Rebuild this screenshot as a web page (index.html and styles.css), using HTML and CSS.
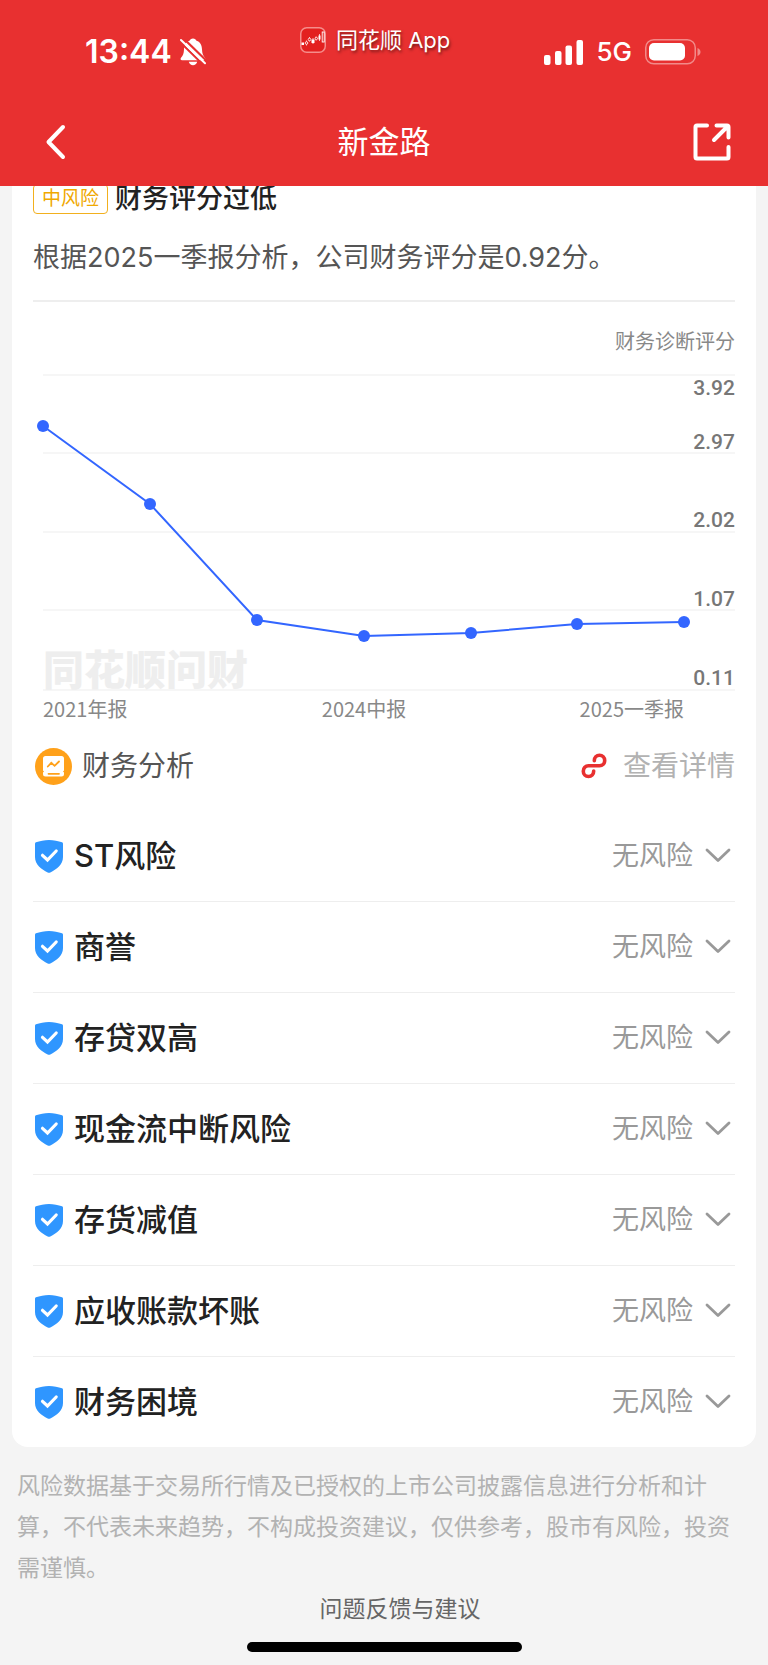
FILE: index.html
```html
<!DOCTYPE html>
<html lang="zh-CN">
<head>
<meta charset="UTF-8">
<meta name="viewport" content="width=device-width, initial-scale=1.0">
<title>新金路</title>
<link rel="stylesheet" href="styles.css">
</head>
<body>
    <!-- shared icons -->
    <svg class="sprite" aria-hidden="true">
        <symbol id="shield" viewBox="0 0 28 33">
            <path d="M14 0C18.500 0 23.500 1 27 2.300Q28 2.700 28 3.800V17C28 24.500 21.500 29.500 15.300 32.500Q14 33.200 12.700 32.500C6.500 29.500 0 24.500 0 17V3.800Q0 2.700 1 2.300C4.500 1 9.500 0 14 0Z" fill="#2f96ff"/>
            <path d="M7.500 15.300L12.500 20L21.200 11" fill="none" stroke="#fff" stroke-width="3.200" stroke-linecap="round" stroke-linejoin="miter"/>
        </symbol>
        <symbol id="arrow-down" viewBox="0 0 26 16">
            <path d="M2 2L13 12.500L24 2" fill="none" stroke="#999" stroke-width="2.800" stroke-linecap="round" stroke-linejoin="round"/>
        </symbol>
    </svg>

    <header class="header">
        <div class="status-bar">
            <div class="status-time">
                <span>13:44</span>
                <svg width="26" height="28" viewBox="0 0 26 28" aria-hidden="true">
                    <path d="M13 0.500C14.800 0.500 16 1.500 16.500 2.800C20.500 4 21.800 7.500 22 11.500C22.200 15.500 23 17.500 24.800 19.500C26 21 25.400 22.300 24 22.300H2C0.600 22.300 0 21 1.200 19.500C3 17.500 3.800 15.500 4 11.500C4.200 7.500 5.500 4 9.500 2.800C10 1.500 11.200 0.500 13 0.500Z" fill="#fff"/>
                    <path d="M8.800 23.800H17.200C16.600 26 15 27.200 13 27.200S9.400 26 8.800 23.800Z" fill="#fff"/>
                    <path d="M2.500 -0.500L27.500 23.700" stroke="#e83030" stroke-width="2.200"/>
                    <path d="M-0.500 3.500L24.500 28" stroke="#e83030" stroke-width="2"/>
                    <path d="M1 2L25 25.300" stroke="#fff" stroke-width="2" stroke-linecap="round"/>
                </svg>
            </div>
            <div class="status-app">
                <svg width="26" height="26" viewBox="0 0 26 26" aria-hidden="true">
                    <rect x="0.750" y="0.750" width="24.500" height="24.500" rx="6" fill="#e3201f" stroke="#f58d8b" stroke-width="1.500"/>
                    <path d="M1.500 15.500H4V18H1.500ZM11.500 12.500H14.500V16H11.500ZM18.500 8.500H20.500V12.500H18.500Z" fill="#fff"/>
                    <path d="M6.500 13.500V18.500M9.500 10V14.500M13 11V17M16 9.500V13.500M19.500 7V14" stroke="#fff" stroke-width="0.700"/>
                    <circle cx="6.500" cy="16" r="1.300" fill="#e3201f" stroke="#fff" stroke-width="0.800"/>
                    <circle cx="9.500" cy="12.500" r="1.300" fill="#e3201f" stroke="#fff" stroke-width="0.800"/>
                    <circle cx="16.300" cy="11.500" r="1.200" fill="#e3201f" stroke="#fff" stroke-width="0.800"/>
                    <rect x="22.200" y="5" width="2" height="10" fill="none" stroke="#fff" stroke-width="0.900"/>
                </svg>
                <span>同花顺 App</span>
            </div>
            <div class="status-right">
                <svg width="39" height="25" viewBox="0 0 39 25" fill="#fff" aria-hidden="true">
                    <rect x="0" y="15" width="6.500" height="10" rx="2"/>
                    <rect x="11" y="11" width="6.500" height="14" rx="2"/>
                    <rect x="21.500" y="5.500" width="6.500" height="19.500" rx="2"/>
                    <rect x="32.500" y="0" width="6.500" height="25" rx="2"/>
                </svg>
                <span>5G</span>
                <svg width="56" height="26" viewBox="0 0 56 26" aria-hidden="true">
                    <rect x="0.750" y="0.750" width="49.500" height="24" rx="8" fill="none" stroke="#f28a89" stroke-width="1.500"/>
                    <rect x="4" y="4" width="36" height="17.500" rx="5" fill="#fff"/>
                    <path d="M52.500 9C54.600 10 55.500 11.300 55.500 13S54.600 16 52.500 17Z" fill="#f28a89"/>
                </svg>
            </div>
        </div>
        <nav class="nav">
            <button type="button" class="nav-btn" aria-label="返回">
                <svg width="22" height="36" viewBox="0 0 22 36">
                    <path d="M18 3L3.500 18L18 33" fill="none" stroke="#fff" stroke-width="4" stroke-linecap="round" stroke-linejoin="round"/>
                </svg>
            </button>
            <h1>新金路</h1>
            <button type="button" class="nav-btn" aria-label="分享">
                <svg width="38" height="38" viewBox="0 0 38 38" fill="none" stroke="#fff" stroke-width="4" stroke-linecap="round" stroke-linejoin="round">
                    <path d="M14 2.500H4Q2.500 2.500 2.500 4V34Q2.500 35.500 4 35.500H34Q35.500 35.500 35.500 34V24"/>
                    <path d="M23.500 2.500H34Q35.500 2.500 35.500 4V14.500M34.500 3.500L21 17"/>
                </svg>
            </button>
        </nav>
    </header>

    <main>
        <div class="card">
            <div class="risk-title">
                <span class="badge">中风险</span>
                <h2>财务评分过低</h2>
            </div>
            <p class="risk-desc">根据2025一季报分析，公司财务评分是0.92分。</p>

            <div class="chart">
                <p class="chart-label">财务诊断评分</p>
                <svg class="chart-plot" viewBox="0 0 702 368" role="img" aria-label="财务诊断评分">
                    <g stroke="#f6f6f6" stroke-width="2">
                        <path d="M10 19H702"/>
                        <path d="M10 97H702"/>
                        <path d="M10 176H702"/>
                        <path d="M10 254H702"/>
                        <path d="M10 334H702"/>
                    </g>
                    <text class="watermark" x="10" y="329">同花顺问财</text>
                    <g class="y-axis">
                        <text x="702" y="39">3.92</text>
                        <text x="702" y="93">2.97</text>
                        <text x="702" y="171">2.02</text>
                        <text x="702" y="250">1.07</text>
                        <text x="702" y="329">0.11</text>
                    </g>
                    <polyline points="10,70 117,148 224,264 331,280 438,277 544,268 651,266" fill="none" stroke="#3366ff" stroke-width="2"/>
                    <g fill="#3366ff">
                        <circle cx="10" cy="70" r="6"/>
                        <circle cx="117" cy="148" r="6"/>
                        <circle cx="224" cy="264" r="6"/>
                        <circle cx="331" cy="280" r="6"/>
                        <circle cx="438" cy="277" r="6"/>
                        <circle cx="544" cy="268" r="6"/>
                        <circle cx="651" cy="266" r="6"/>
                    </g>
                    <g class="x-axis">
                        <text x="10" y="361">2021年报</text>
                        <text x="331" y="361" text-anchor="middle">2024中报</text>
                        <text x="651" y="361" text-anchor="end">2025一季报</text>
                    </g>
                </svg>
            </div>

            <div class="source">
                <svg width="37" height="37" viewBox="0 0 37 37" aria-hidden="true">
                    <circle cx="18.500" cy="18.500" r="18.500" fill="#ffa11a"/>
                    <path d="M10.500 8H26.500Q29 8 29 10.500V22.500L28 23.500L29 24.500V26Q29 28.500 26.500 28.500H10.500Q8 28.500 8 26V24.500L9 23.500L8 22.500V10.500Q8 8 10.500 8Z" fill="#fff"/>
                    <path d="M12.800 18.500L16.300 14.800L19.600 17.800L24 13.500M13.500 25.800H24" fill="none" stroke="#ffa11a" stroke-width="1.800" stroke-linecap="round"/>
                </svg>
                <span>财务分析</span>
                <a href="#detail">
                    <svg width="26" height="26" viewBox="0 0 26 26" aria-hidden="true">
                        <path d="M13.300 7.700C13.300 4.500 15.500 2.200 18.500 2.200S23.700 4.500 23.700 7.500S21.500 12.800 18.500 12.800H7.500C4.500 12.800 2.300 15 2.300 18.200S4.500 23.500 7.500 23.500S12.700 21.500 12.700 18" fill="none" stroke="#e83030" stroke-width="3.600" stroke-linecap="round"/>
                    </svg>
                    查看详情
                </a>
            </div>

            <ul class="risk-list">
                <li><button type="button"><svg class="shield"><use href="#shield"/></svg><span class="name">ST风险</span><span>无风险</span><svg class="arrow"><use href="#arrow-down"/></svg></button></li>
                <li><button type="button"><svg class="shield"><use href="#shield"/></svg><span class="name">商誉</span><span>无风险</span><svg class="arrow"><use href="#arrow-down"/></svg></button></li>
                <li><button type="button"><svg class="shield"><use href="#shield"/></svg><span class="name">存贷双高</span><span>无风险</span><svg class="arrow"><use href="#arrow-down"/></svg></button></li>
                <li><button type="button"><svg class="shield"><use href="#shield"/></svg><span class="name">现金流中断风险</span><span>无风险</span><svg class="arrow"><use href="#arrow-down"/></svg></button></li>
                <li><button type="button"><svg class="shield"><use href="#shield"/></svg><span class="name">存货减值</span><span>无风险</span><svg class="arrow"><use href="#arrow-down"/></svg></button></li>
                <li><button type="button"><svg class="shield"><use href="#shield"/></svg><span class="name">应收账款坏账</span><span>无风险</span><svg class="arrow"><use href="#arrow-down"/></svg></button></li>
                <li><button type="button"><svg class="shield"><use href="#shield"/></svg><span class="name">财务困境</span><span>无风险</span><svg class="arrow"><use href="#arrow-down"/></svg></button></li>
            </ul>
        </div>
    </main>

    <footer class="footer">
        <p>风险数据基于交易所行情及已授权的上市公司披露信息进行分析和计算，不代表未来趋势，不构成投资建议，仅供参考，股市有风险，投资需谨慎。</p>
        <a href="#feedback">问题反馈与建议</a>
        <div class="home-bar"></div>
    </footer>
</body>
</html>
```
FILE: styles.css
```css
* {
    box-sizing: border-box;
}

body {
    margin: 0;
    background-color: #f4f4f4;
    color: #222;
    font-family: Inter, "Noto Sans CJK SC", sans-serif;
    font-size: 27px;
    line-height: 32px;
}

h1, h2, p, ul {
    margin: 0;
    padding: 0;
}

svg {
    display: block;
    flex-shrink: 0;
}

button {
    padding: 0;
    border: none;
    background: none;
    font: inherit;
    cursor: pointer;
}

a {
    text-decoration: none;
}

.sprite {
    position: absolute;
    width: 0;
    height: 0;
}

/* header */
.header {
    position: relative;
    z-index: 1;
    background-color: #e83030;
    color: #fff;
}

.status-bar {
    display: flex;
    justify-content: space-between;
    padding: 26px 67px 20px 85px;
}

.status-time,
.status-app,
.status-right {
    display: flex;
    align-items: center;
}

.status-time {
    gap: 8px;
    height: 52px;
    font-size: 32px;
    font-weight: 600;
}

.status-app {
    gap: 10px;
    height: 28px;
    font-size: 22px;
    text-shadow: 1px 2px 3px rgba(0, 0, 0, 0.5);
}

.status-right {
    gap: 13px;
    height: 52px;
    font-size: 26px;
    font-weight: 500;
}

.nav {
    display: flex;
    justify-content: space-between;
    align-items: center;
    height: 88px;
    padding: 0 37px;
}

.nav h1 {
    font-size: 31px;
    font-weight: 400;
}

.nav-btn {
    display: flex;
    justify-content: center;
    width: 38px;
}

/* card, its top is scrolled under the header */
.card {
    margin: -16px 12px 0;
    padding: 13px 21px 0;
    background-color: #fff;
    border-radius: 16px;
}

.risk-title {
    display: flex;
    align-items: center;
    gap: 7px;
    height: 32px;
}

.risk-title h2 {
    font-size: 27px;
    font-weight: 500;
}

.badge {
    padding: 0 8px;
    border: 1px solid #f2b01e;
    border-radius: 4px;
    color: #f0a800;
    font-size: 19px;
    line-height: 28px;
}

.risk-desc {
    padding: 23px 0 22px;
    border-bottom: 2px solid #eee;
    color: #555;
    line-height: 40px;
}

.chart {
    padding-top: 26px;
}

.chart-label {
    color: #888;
    font-size: 20px;
    line-height: 28px;
    text-align: right;
}

.chart-plot {
    width: 100%;
    font-family: "Noto Sans CJK SC", sans-serif;
    font-size: 20px;
}

.watermark {
    fill: #eee;
    font-size: 41px;
    font-weight: 900;
}

.y-axis {
    fill: #777;
    font-family: Roboto, sans-serif;
    font-size: 21px;
    font-weight: 500;
    text-anchor: end;
}

.x-axis {
    fill: #888;
}

.source {
    display: flex;
    align-items: center;
    gap: 10px;
    height: 40px;
    margin: 22px 0 25px;
    padding-left: 2px;
    color: #555;
    font-size: 28px;
}

.source a {
    display: flex;
    align-items: center;
    gap: 16px;
    margin-left: auto;
    color: #b2b2b2;
}

.risk-list {
    list-style: none;
}

.risk-list li + li {
    border-top: 1px solid #eee;
}

.risk-list button {
    display: flex;
    align-items: center;
    width: 100%;
    height: 90px;
    padding: 0 4px 0 2px;
    color: #999;
}

.risk-list .name {
    margin-right: auto;
    color: #222;
    font-size: 31px;
    font-weight: 500;
}

.shield {
    width: 28px;
    height: 33px;
    margin-right: 11px;
}

.arrow {
    width: 26px;
    height: 16px;
    margin-left: 12px;
}

/* footer */
.footer {
    padding: 19px 17px 14px;
    color: #b2b2b2;
    font-size: 23px;
    line-height: 41px;
    text-align: center;
}

.footer p {
    text-align: left;
}

.footer a {
    display: inline-block;
    padding-left: 32px;
    color: #666;
    line-height: 32px;
}

.home-bar {
    width: 275px;
    max-width: 80%;
    height: 10px;
    margin: 12px auto 0;
    border-radius: 5px;
    background-color: #000;
}
```
